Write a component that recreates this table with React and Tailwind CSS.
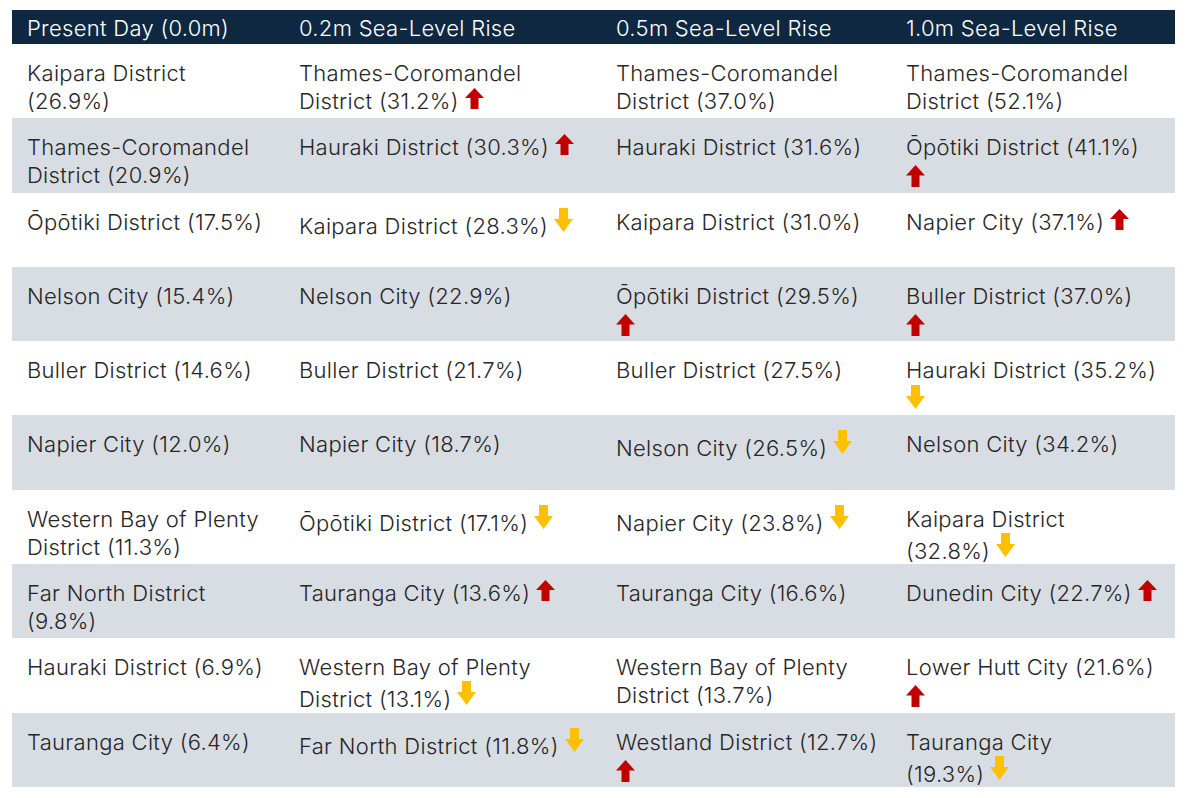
import React from "react";

function Up() {
  return (
    <svg viewBox="0 0 19 21" className="inline-block w-[19px] h-[21px] align-baseline ml-[6px]">
      <path d="M9.5 0 L19 10 L13.5 10 L13.5 21 L5.5 21 L5.5 10 L0 10 Z" fill="#c00000" />
    </svg>
  );
}

function Down() {
  return (
    <svg viewBox="0 0 19 24" className="inline-block w-[19px] h-[24px] align-[2px] ml-[6px]">
      <path d="M5 0 L14 0 L14 11 L19 11 L9.5 24 L0 11 L5 11 Z" fill="#ffc000" />
    </svg>
  );
}

function UpBlock() {
  return (
    <svg viewBox="0 0 19 22" className="block w-[19px] h-[22px] mt-[4px]">
      <path d="M9.5 0 L19 10.5 L13.5 10.5 L13.5 22 L5.5 22 L5.5 10.5 L0 10.5 Z" fill="#c00000" />
    </svg>
  );
}

function DownBlock() {
  return (
    <svg viewBox="0 0 19 24" className="block w-[19px] h-[24px] mt-[1px]">
      <path d="M5 0 L14 0 L14 11 L19 11 L9.5 24 L0 11 L5 11 Z" fill="#ffc000" />
    </svg>
  );
}

// each cell: [lines, arrow, placement]  arrow "u" | "d", placement "i" inline, "b" below
const rows = [
  [
    [["Kaipara District", "(26.9%)"]],
    [["Thames-Coromandel", "District (31.2%)"], "u", "i"],
    [["Thames-Coromandel", "District (37.0%)"]],
    [["Thames-Coromandel", "District (52.1%)"]],
  ],
  [
    [["Thames-Coromandel", "District (20.9%)"]],
    [["Hauraki District (30.3%)"], "u", "i"],
    [["Hauraki District (31.6%)"]],
    [["Ōpōtiki District (41.1%)"], "u", "b"],
  ],
  [
    [["Ōpōtiki District (17.5%)"]],
    [["Kaipara District (28.3%)"], "d", "i"],
    [["Kaipara District (31.0%)"]],
    [["Napier City (37.1%)"], "u", "i"],
  ],
  [
    [["Nelson City (15.4%)"]],
    [["Nelson City (22.9%)"]],
    [["Ōpōtiki District (29.5%)"], "u", "b"],
    [["Buller District (37.0%)"], "u", "b"],
  ],
  [
    [["Buller District (14.6%)"]],
    [["Buller District (21.7%)"]],
    [["Buller District (27.5%)"]],
    [["Hauraki District (35.2%)"], "d", "b"],
  ],
  [
    [["Napier City (12.0%)"]],
    [["Napier City (18.7%)"]],
    [["Nelson City (26.5%)"], "d", "i"],
    [["Nelson City (34.2%)"]],
  ],
  [
    [["Western Bay of Plenty", "District (11.3%)"]],
    [["Ōpōtiki District (17.1%)"], "d", "i"],
    [["Napier City (23.8%)"], "d", "i"],
    [["Kaipara District", "(32.8%)"], "d", "i"],
  ],
  [
    [["Far North District", "(9.8%)"]],
    [["Tauranga City (13.6%)"], "u", "i"],
    [["Tauranga City (16.6%)"]],
    [["Dunedin City (22.7%)"], "u", "i"],
  ],
  [
    [["Hauraki District (6.9%)"]],
    [["Western Bay of Plenty", "District (13.1%)"], "d", "i"],
    [["Western Bay of Plenty", "District (13.7%)"]],
    [["Lower Hutt City (21.6%)"], "u", "b"],
  ],
  [
    [["Tauranga City (6.4%)"]],
    [["Far North District (11.8%)"], "d", "i"],
    [["Westland District (12.7%)"], "u", "b"],
    [["Tauranga City", "(19.3%)"], "d", "i"],
  ],
];

const headers = [
  "Present Day (0.0m)",
  "0.2m Sea-Level Rise",
  "0.5m Sea-Level Rise",
  "1.0m Sea-Level Rise",
];

function Cell({ cell }) {
  const [lines, arrow, place] = cell;
  return (
    <div className="pl-[15px] pt-[15px] whitespace-nowrap">
      {lines.map((l, i) => (
        <div key={i}>
          {l}
          {i === lines.length - 1 && place === "i" && (arrow === "u" ? <Up /> : <Down />)}
        </div>
      ))}
      {place === "b" && (arrow === "u" ? <UpBlock /> : <DownBlock />)}
    </div>
  );
}

export default function App() {
  return (
    <div
      className="w-[1185px] h-[798px] bg-white pt-[10px] pl-[12px] overflow-hidden text-[22px] leading-[28px] font-light tracking-[0.3px] text-[#262626]"
      style={{ fontFamily: "Inter, Roboto, 'Liberation Sans', sans-serif" }}
    >
      <div className="w-[1163px]">
        <div className="grid grid-cols-[272px_317px_290px_284px] h-[34px] bg-[#0e2841] text-white items-center">
          {headers.map((h) => (
            <div key={h} className="pl-[15px] pt-[2px] whitespace-nowrap">
              {h}
            </div>
          ))}
        </div>
        {rows.map((r, i) => (
          <div
            key={i}
            className={
              "grid grid-cols-[272px_317px_290px_284px] h-[74.3px] " +
              (i % 2 === 1 ? "bg-[#d8dde4]" : "bg-white")
            }
          >
            {r.map((c, j) => (
              <Cell key={j} cell={c} />
            ))}
          </div>
        ))}
      </div>
    </div>
  );
}
